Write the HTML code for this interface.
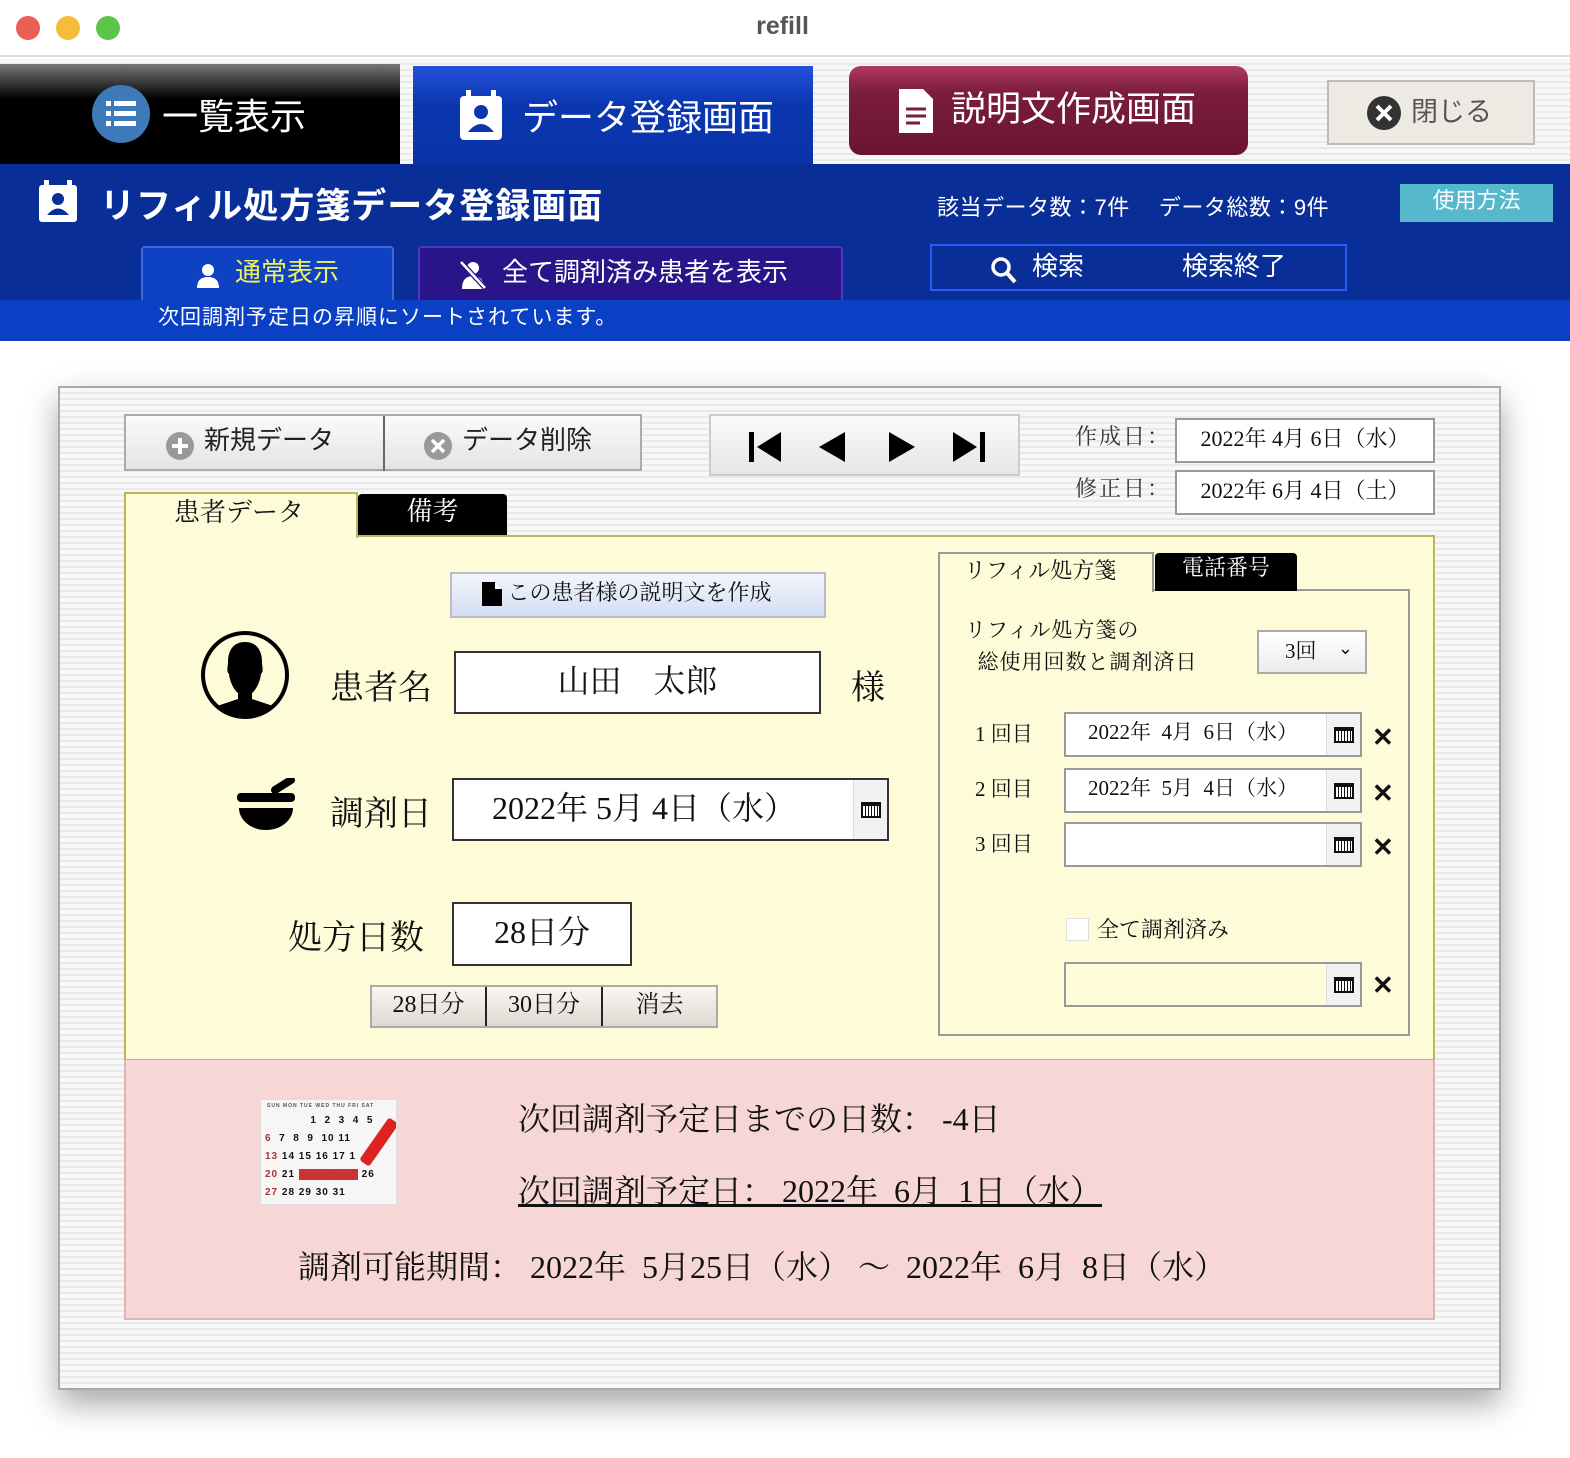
<!DOCTYPE html>
<html><head><meta charset="utf-8">
<style>
*{margin:0;padding:0;box-sizing:border-box}
body{width:1570px;height:1458px;position:relative;overflow:hidden;background:#fff;font-family:"Liberation Serif","Noto Serif CJK SC",serif;color:#111}
.a{position:absolute}
.sans{font-family:"Liberation Sans","Noto Sans CJK JP",sans-serif}
.stripe{background:repeating-linear-gradient(#f7f7f7 0 4px,#e9e9e9 4px 6px)}
.box{background:#fff;border:2px solid #333}
.gbox{background:#fff;border:2px solid #999}
.cal{position:absolute;right:0;top:0;bottom:0;width:34px;background:#f2f2f2;border-left:1px solid #ddd;display:flex;align-items:center;justify-content:center}
.ci{width:20px;height:16px;border:2px solid #111;border-top-width:4px;background:repeating-linear-gradient(90deg,#fff 0 2px,#111 2px 3px)}
.x{position:absolute;font-size:26px;font-family:"Liberation Sans",sans-serif;font-weight:bold}
</style></head><body>
<div class="a" style="left:0;top:0;width:1570px;height:57px;background:#fff;border-bottom:2px solid #ddd"></div>
<div class="a" style="left:16px;top:16px;width:24px;height:24px;border-radius:50%;background:#ec5f57"></div>
<div class="a" style="left:56px;top:16px;width:24px;height:24px;border-radius:50%;background:#f4bd3b"></div>
<div class="a" style="left:96px;top:16px;width:24px;height:24px;border-radius:50%;background:#5ac548"></div>
<div class="a sans" style="left:735px;top:12px;width:95px;text-align:center;font-size:25px;font-weight:bold;color:#555">refill</div>
<div class="a stripe" style="left:0;top:59px;width:1570px;height:105px"></div>
<div class="a sans" style="left:0;top:64px;width:400px;height:100px;background:linear-gradient(#777,#000 35%,#000);color:#fff;font-size:36px;display:flex;align-items:center;padding-left:92px">
<svg width="58" height="58" viewBox="0 0 58 58"><circle cx="29" cy="29" r="29" fill="#3f7ab8"/><g fill="#fff"><rect x="14" y="16" width="5" height="5"/><rect x="22" y="16" width="22" height="5"/><rect x="14" y="26" width="5" height="5"/><rect x="22" y="26" width="22" height="5"/><rect x="14" y="36" width="5" height="5"/><rect x="22" y="36" width="22" height="5"/></g></svg><span style="margin-left:12px">一覧表示</span></div>
<div class="a sans" style="left:413px;top:66px;width:400px;height:98px;background:linear-gradient(#2352d8,#0a36b0 40%,#0a34a8);color:#fff;font-size:36px;display:flex;align-items:center;padding-left:45px">
<svg width="46" height="50" viewBox="0 0 46 50"><rect x="2" y="6" width="42" height="44" rx="4" fill="#fff"/><rect x="8" y="0" width="5" height="10" fill="#fff"/><rect x="33" y="0" width="5" height="10" fill="#fff"/><circle cx="23" cy="22" r="7" fill="#0a36b0"/><path d="M10 42 Q23 26 36 42Z" fill="#0a36b0"/></svg><span style="margin-left:18px">データ登録画面</span></div>
<div class="a sans" style="left:849px;top:66px;width:399px;height:89px;border-radius:12px;background:linear-gradient(#b03a60,#7a1d3a 30%,#6a1530);color:#fff;font-size:35px;display:flex;align-items:center;padding-left:50px">
<svg width="34" height="44" viewBox="0 0 34 44"><path d="M0 0h24l10 10v34H0z" fill="#fff"/><path d="M7 20h20M7 27h20M7 34h14" stroke="#7a1d3a" stroke-width="3"/></svg><span style="margin-left:18px;margin-top:-8px">説明文作成画面</span></div>
<div class="a sans" style="left:1327px;top:80px;width:208px;height:65px;background:#eceae3;border:2px solid #bbb;font-size:27px;color:#555;display:flex;align-items:center;padding-left:38px">
<svg width="34" height="34" viewBox="0 0 34 34"><circle cx="17" cy="17" r="17" fill="#333"/><path d="M10 10l14 14M24 10L10 24" stroke="#fff" stroke-width="4"/></svg><span style="margin-left:10px;margin-top:-6px">閉じる</span></div>
<div class="a" style="left:0;top:164px;width:1570px;height:136px;background:#0a2e98"></div>
<svg class="a" style="left:38px;top:180px" width="40" height="42" viewBox="0 0 40 42"><rect x="1" y="5" width="38" height="37" rx="3" fill="#fff"/><rect x="6" y="0" width="5" height="8" fill="#fff"/><rect x="29" y="0" width="5" height="8" fill="#fff"/><circle cx="20" cy="19" r="6" fill="#0a2e98"/><path d="M9 35 Q20 22 31 35Z" fill="#0a2e98"/></svg>
<div class="a sans" style="left:100px;top:178px;font-size:35px;letter-spacing:1px;font-weight:bold;color:#fff;white-space:nowrap">リフィル処方箋データ登録画面</div>
<div class="a sans" style="left:937px;top:190px;font-size:22px;letter-spacing:0.5px;color:#fff;white-space:nowrap">該当データ数：7件　 データ総数：9件</div>
<div class="a sans" style="left:1400px;top:184px;width:153px;height:38px;background:#56b8cc;color:#fff;font-size:22px;text-align:center;line-height:34px">使用方法</div>
<div class="a sans" style="left:141px;top:246px;width:253px;height:56px;background:#0f42c2;border:2px solid #3a6ae0;border-bottom:none;border-radius:4px 4px 0 0;color:#f0f060;font-size:26px;display:flex;align-items:center;padding-left:52px">
<svg width="26" height="26" viewBox="0 0 26 26"><circle cx="13" cy="8" r="6" fill="#fff"/><path d="M2 26Q2 15 13 15Q24 15 24 26Z" fill="#fff"/></svg><span style="margin-left:14px;margin-top:-10px">通常表示</span></div>
<div class="a sans" style="left:418px;top:246px;width:425px;height:54px;background:#2a148a;border:2px solid #4a3ac0;border-bottom:none;border-radius:4px 4px 0 0;color:#fff;font-size:26px;display:flex;align-items:center;padding-left:38px">
<svg width="30" height="30" viewBox="0 0 30 30"><circle cx="15" cy="9" r="6" fill="#fff"/><path d="M4 30Q4 17 15 17Q26 17 26 30Z" fill="#fff"/><path d="M3 3L27 29" stroke="#2a148a" stroke-width="5"/><path d="M3 3L27 29" stroke="#fff" stroke-width="2.5"/></svg><span style="margin-left:14px;margin-top:-8px">全て調剤済み患者を表示</span></div>
<div class="a sans" style="left:930px;top:244px;width:417px;height:47px;border:2px solid #2a5af5;color:#fff;font-size:26px">
<svg class="a" style="left:58px;top:10px" width="28" height="28" viewBox="0 0 28 28"><circle cx="11" cy="11" r="8" fill="none" stroke="#fff" stroke-width="3.5"/><path d="M17 17l8 9" stroke="#fff" stroke-width="4"/></svg>
<span class="a" style="left:100px;top:0">検索</span><span class="a" style="left:250px;top:0">検索終了</span></div>
<div class="a sans" style="left:0;top:300px;width:1570px;height:41px;background:#0a40c4;color:#fff;font-size:21px;letter-spacing:1px;padding-left:158px;line-height:36px">次回調剤予定日の昇順にソートされています。</div>
<div class="a stripe" style="left:58px;top:386px;width:1443px;height:1004px;border:2px solid #aaa;box-shadow:0 14px 30px rgba(0,0,0,.35)"></div>
<div class="a sans" style="left:124px;top:414px;width:518px;height:57px;border:2px solid #aaa;background:linear-gradient(#fafafa,#e4e4e4);font-size:26px;color:#222">
<div class="a" style="left:257px;top:0;width:2px;height:55px;background:#666"></div>
<svg class="a" style="left:40px;top:16px" width="28" height="28"><circle cx="14" cy="14" r="14" fill="#999"/><path d="M14 6v16M6 14h16" stroke="#fff" stroke-width="4"/></svg>
<span class="a" style="left:78px;top:4px">新規データ</span>
<svg class="a" style="left:298px;top:16px" width="28" height="28"><circle cx="14" cy="14" r="14" fill="#999"/><path d="M8 8l12 12M20 8L8 20" stroke="#fff" stroke-width="3.5"/></svg>
<span class="a" style="left:336px;top:4px">データ削除</span></div>
<div class="a" style="left:709px;top:414px;width:311px;height:62px;border:2px solid #ccc;background:linear-gradient(#fafafa,#e6e6e6)">
<svg class="a" style="left:38px;top:14px" width="240" height="34" viewBox="0 0 240 34"><rect x="0" y="2" width="5" height="30"/><path d="M32 2L8 17L32 32Z"/><path d="M96 2L70 17L96 32Z"/><path d="M140 2L166 17L140 32Z"/><path d="M204 2L228 17L204 32Z"/><rect x="231" y="2" width="5" height="30"/></svg></div>
<div class="a" style="left:1075px;top:420px;font-size:22px;color:#333;letter-spacing:2px">作成日：</div>
<div class="a gbox" style="left:1175px;top:418px;width:260px;height:45px;font-size:22px;text-align:center;line-height:38px">2022年 4月 6日（水）</div>
<div class="a" style="left:1075px;top:472px;font-size:22px;color:#333;letter-spacing:2px">修正日：</div>
<div class="a gbox" style="left:1175px;top:470px;width:260px;height:45px;font-size:22px;text-align:center;line-height:38px">2022年 6月 4日（土）</div>
<div class="a" style="left:124px;top:535px;width:1311px;height:526px;background:#fdfbd8;border:2px solid #bdb55a"></div>
<div class="a" style="left:124px;top:492px;width:234px;height:46px;background:#fdfbd8;border:2px solid #bdb55a;border-bottom:none;font-size:26px;padding-left:48px;line-height:38px">患者データ</div>
<div class="a" style="left:358px;top:494px;width:149px;height:41px;background:#000;border-radius:4px 4px 0 0;color:#fff;font-size:26px;text-align:center;line-height:36px">備考</div>
<div class="a" style="left:450px;top:572px;width:376px;height:46px;border:2px solid #bbc;background:linear-gradient(#f4f6fc,#d4def4);font-size:22px;line-height:38px;padding-left:30px">
<svg width="20" height="24" viewBox="0 0 20 24" style="vertical-align:-6px"><path d="M0 0h13l7 7v17H0z"/><path d="M13 0v7h7" fill="#fff"/></svg> この患者様の説明文を作成</div>
<svg class="a" style="left:200px;top:630px" width="90" height="90" viewBox="0 0 90 90"><defs><clipPath id="c"><circle cx="45" cy="45" r="41"/></clipPath></defs><circle cx="45" cy="45" r="42" fill="none" stroke="#000" stroke-width="4"/><g clip-path="url(#c)"><path d="M45 12c-12 0-17 9-17 20 0 5-2 9 1 12 1 9 6 17 9 19v6l-30 10v20h74V79l-30-10v-6c3-2 8-10 9-19 3-3 1-7 1-12 0-11-5-20-17-20z"/></g></svg>
<div class="a" style="left:330px;top:660px;font-size:34px">患者名</div>
<div class="a box" style="left:454px;top:651px;width:367px;height:63px;font-size:32px;text-align:center;line-height:56px">山田　太郎</div>
<div class="a" style="left:851px;top:660px;font-size:34px">様</div>
<svg class="a" style="left:237px;top:778px" width="60" height="52" viewBox="0 0 60 52"><path d="M38 12L54 2" stroke="#000" stroke-width="8" stroke-linecap="round"/><rect x="0" y="15" width="58" height="9" rx="4"/><path d="M2 30h54c0 12-12 22-27 22S2 42 2 30z"/></svg>
<div class="a" style="left:330px;top:786px;font-size:34px">調剤日</div>
<div class="a box" style="left:452px;top:778px;width:437px;height:63px;font-size:32px;line-height:56px;padding-left:38px">2022年 5月 4日（水）<div class="cal"><div class="ci"></div></div></div>
<div class="a" style="left:288px;top:910px;font-size:34px">処方日数</div>
<div class="a box" style="left:452px;top:902px;width:180px;height:64px;font-size:32px;text-align:center;line-height:56px">28日分</div>
<div class="a" style="left:370px;top:985px;width:348px;height:43px;border:2px solid #aaa;background:linear-gradient(#faf6f2,#e0d8d2);font-size:24px;display:flex">
<div style="width:115px;text-align:center;line-height:36px;border-right:2px solid #222">28日分</div><div style="width:116px;text-align:center;line-height:36px;border-right:2px solid #222">30日分</div><div style="flex:1;text-align:center;line-height:36px">消去</div></div>
<div class="a" style="left:938px;top:589px;width:472px;height:447px;border:2px solid #999"></div>
<div class="a" style="left:938px;top:552px;width:216px;height:40px;background:#fdfbd8;border:2px solid #999;border-bottom:none;font-size:22px;padding-left:24px;line-height:34px">リフィル処方箋</div>
<div class="a" style="left:1155px;top:553px;width:142px;height:38px;background:#000;border-radius:4px 4px 0 0;color:#fff;font-size:22px;text-align:center;line-height:30px">電話番号</div>
<div class="a" style="left:965px;top:614px;font-size:21px;line-height:32px;letter-spacing:1px">リフィル処方箋の<br>&nbsp;&nbsp;総使用回数と調剤済日</div>
<div class="a" style="left:1257px;top:630px;width:110px;height:44px;border:2px solid #aaa;background:linear-gradient(#fff,#ececec);font-size:21px;line-height:38px;padding-left:26px">3回<span style="position:absolute;right:12px;top:-2px;font-size:18px;font-family:'DejaVu Sans',sans-serif">⌄</span></div>
<div class="a" style="left:975px;top:718px;font-size:21px">1 回目</div>
<div class="a gbox" style="left:1064px;top:712px;width:298px;height:45px;font-size:21px;padding-left:22px;line-height:36px">2022年&nbsp; 4月&nbsp; 6日（水）<div class="cal"><div class="ci"></div></div></div>
<div class="x" style="left:1372px;top:722px">✕</div>
<div class="a" style="left:975px;top:773px;font-size:21px">2 回目</div>
<div class="a gbox" style="left:1064px;top:768px;width:298px;height:45px;font-size:21px;padding-left:22px;line-height:36px">2022年&nbsp; 5月&nbsp; 4日（水）<div class="cal"><div class="ci"></div></div></div>
<div class="x" style="left:1372px;top:778px">✕</div>
<div class="a" style="left:975px;top:828px;font-size:21px">3 回目</div>
<div class="a gbox" style="left:1064px;top:822px;width:298px;height:45px"><div class="cal"><div class="ci"></div></div></div>
<div class="x" style="left:1372px;top:832px">✕</div>
<div class="a" style="left:1066px;top:918px;width:23px;height:23px;background:#fff;border:1px solid #ddd"></div>
<div class="a" style="left:1097px;top:913px;font-size:22px">全て調剤済み</div>
<div class="a" style="left:1064px;top:962px;width:298px;height:45px;background:#fdfbd8;border:2px solid #999"><div class="cal"><div class="ci"></div></div></div>
<div class="x" style="left:1372px;top:970px">✕</div>
<div class="a" style="left:124px;top:1060px;width:1311px;height:260px;background:#f7d7d5;border:2px solid #d8b8b6;border-top:none"></div>
<div class="a sans" style="left:260px;top:1099px;width:137px;height:106px;background:#f6f6f6;border:1px solid #ddd;font-size:10px;font-weight:bold;overflow:hidden">
<div style="font-size:5px;color:#555;padding:3px 6px;white-space:nowrap;letter-spacing:1px">SUN MON TUE WED THU FRI SAT</div>
<div style="padding:0 4px;line-height:18px;letter-spacing:1px;white-space:nowrap">&nbsp;&nbsp;&nbsp;&nbsp;&nbsp;&nbsp;&nbsp;&nbsp;&nbsp;&nbsp;&nbsp;&nbsp;1&nbsp; 2&nbsp; 3&nbsp; 4&nbsp; 5<br><span style="color:#a33">6</span>&nbsp; 7&nbsp; 8&nbsp; 9&nbsp; 10 11<br><span style="color:#a33">13</span> 14 15 16 17 1<br><span style="color:#a33">20</span> 21 <span style="background:#c33;color:#c33">222324252</span> 26<br><span style="color:#a33">27</span> 28 29 30 31</div>
<div class="a" style="left:112px;top:16px;width:12px;height:52px;background:#d22;transform:rotate(35deg);border-radius:3px"></div></div>
<div class="a" style="left:518px;top:1094px;font-size:32px;white-space:nowrap">次回調剤予定日までの日数：&nbsp;-4日</div>
<div class="a" style="left:518px;top:1166px;font-size:32px;white-space:nowrap;text-decoration:underline">次回調剤予定日：&nbsp;2022年&nbsp; 6月&nbsp; 1日（水）</div>
<div class="a" style="left:298px;top:1242px;font-size:32px;white-space:nowrap">調剤可能期間：&nbsp;2022年&nbsp; 5月25日（水）&nbsp;～&nbsp; 2022年&nbsp; 6月&nbsp; 8日（水）</div>
</body></html>
